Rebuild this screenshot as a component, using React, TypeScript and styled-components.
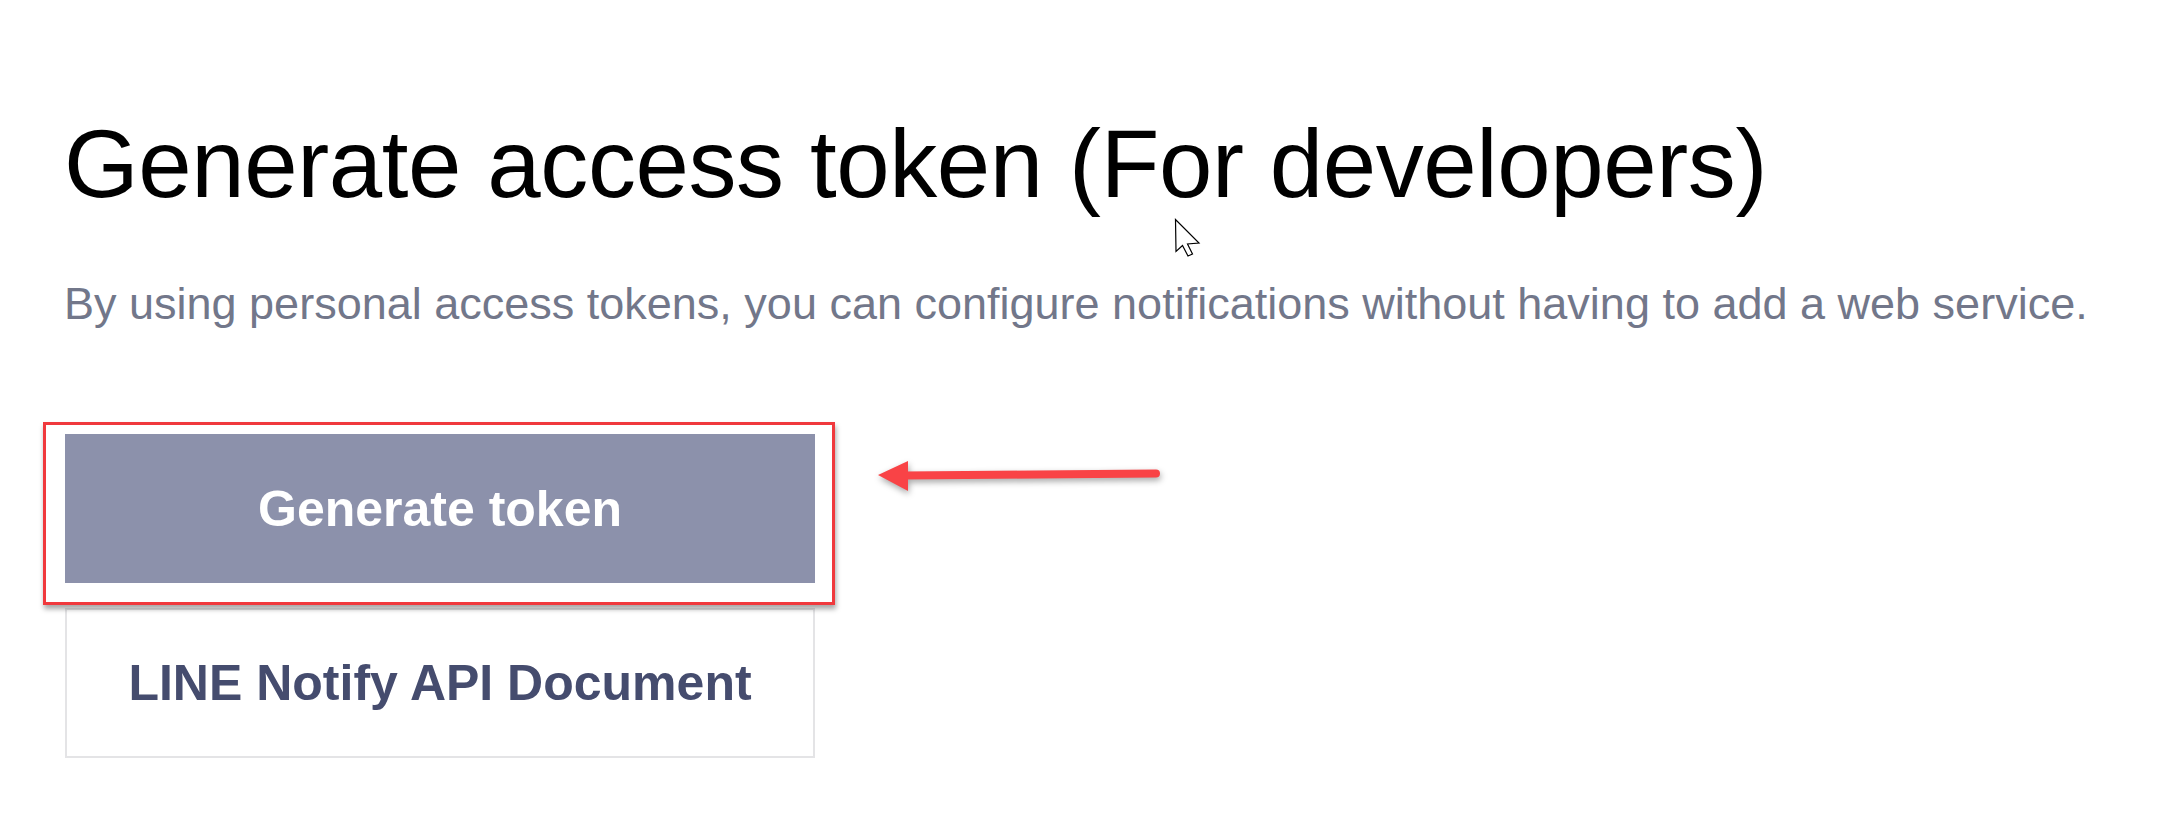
import React from "react";
import styled, { createGlobalStyle } from "styled-components";

const GlobalStyle = createGlobalStyle`
  html, body {
    margin: 0;
    padding: 0;
    background: #ffffff;
  }
  body {
    font-family: "Liberation Sans", Arial, Helvetica, sans-serif;
  }
`;

const Page = styled.main`
  position: relative;
  width: 2180px;
  height: 814px;
  box-sizing: border-box;
  padding: 109px 0 0 64px;
  display: flex;
  flex-direction: column;
  align-items: flex-start;
  overflow: hidden;
`;

const Title = styled.h1`
  margin: 0;
  font-size: 96px;
  line-height: 110px;
  font-weight: 400;
  letter-spacing: -0.4px;
  color: #000000;
  white-space: nowrap;
`;

const Lead = styled.p`
  margin: 59px 0 0;
  font-size: 45px;
  line-height: 52px;
  color: #72778a;
  white-space: nowrap;
`;

const ButtonGroup = styled.div`
  position: relative;
  margin: 104px 0 0 1px;
  display: flex;
  flex-direction: column;
  gap: 25px;
  width: 750px;
`;

const ActionButton = styled.button<{ $variant: "primary" | "secondary" }>`
  box-sizing: border-box;
  width: 750px;
  height: ${(p) => (p.$variant === "primary" ? "149px" : "150px")};
  display: flex;
  align-items: center;
  justify-content: center;
  font-family: "Liberation Sans", Arial, Helvetica, sans-serif;
  font-size: 50px;
  font-weight: 700;
  border-radius: 0;
  cursor: pointer;
  padding: 0;
  background: ${(p) => (p.$variant === "primary" ? "#8c91ab" : "#ffffff")};
  color: ${(p) => (p.$variant === "primary" ? "#ffffff" : "#454c6e")};
  border: ${(p) => (p.$variant === "primary" ? "none" : "2px solid #e4e4e6")};
`;

const Highlight = styled.div`
  position: absolute;
  left: -22px;
  top: -12px;
  width: 792px;
  height: 183px;
  box-sizing: border-box;
  border: 3px solid #f0393d;
  box-shadow: 1px 4px 5px rgba(0, 0, 0, 0.35);
  pointer-events: none;
`;

const Pointer = styled.svg`
  position: absolute;
  left: 813px;
  top: 21px;
  overflow: visible;
  filter: drop-shadow(1px 3px 3px rgba(0, 0, 0, 0.35));
`;

const Cursor = styled.svg`
  position: absolute;
  left: 1175px;
  top: 219px;
  overflow: visible;
`;

export default function App() {
  return (
    <>
      <GlobalStyle />
      <Page>
        <Title>Generate access token (For developers)</Title>
        <Lead>
          By using personal access tokens, you can configure notifications without having to add a web service.
        </Lead>
        <ButtonGroup>
          <ActionButton $variant="primary">Generate token</ActionButton>
          <ActionButton $variant="secondary">LINE Notify API Document</ActionButton>
          <Highlight />
          <Pointer width="282" height="40" viewBox="0 0 282 40">
            <line x1="26" y1="20.5" x2="278" y2="18.5" stroke="#f94346" strokeWidth="8" strokeLinecap="round" />
            <polygon points="0,20 30,6 30,36" fill="#f94346" />
          </Pointer>
        </ButtonGroup>
        <Cursor width="26" height="38" viewBox="0 0 26 38">
          <path
            d="M0.5 0.5 L1 32.5 L7.5 26.5 L13 37 L17.5 35 L12.5 25 L24 24 Z"
            fill="#ffffff"
            stroke="#000000"
            strokeWidth="1.2"
            strokeLinejoin="miter"
          />
        </Cursor>
      </Page>
    </>
  );
}
